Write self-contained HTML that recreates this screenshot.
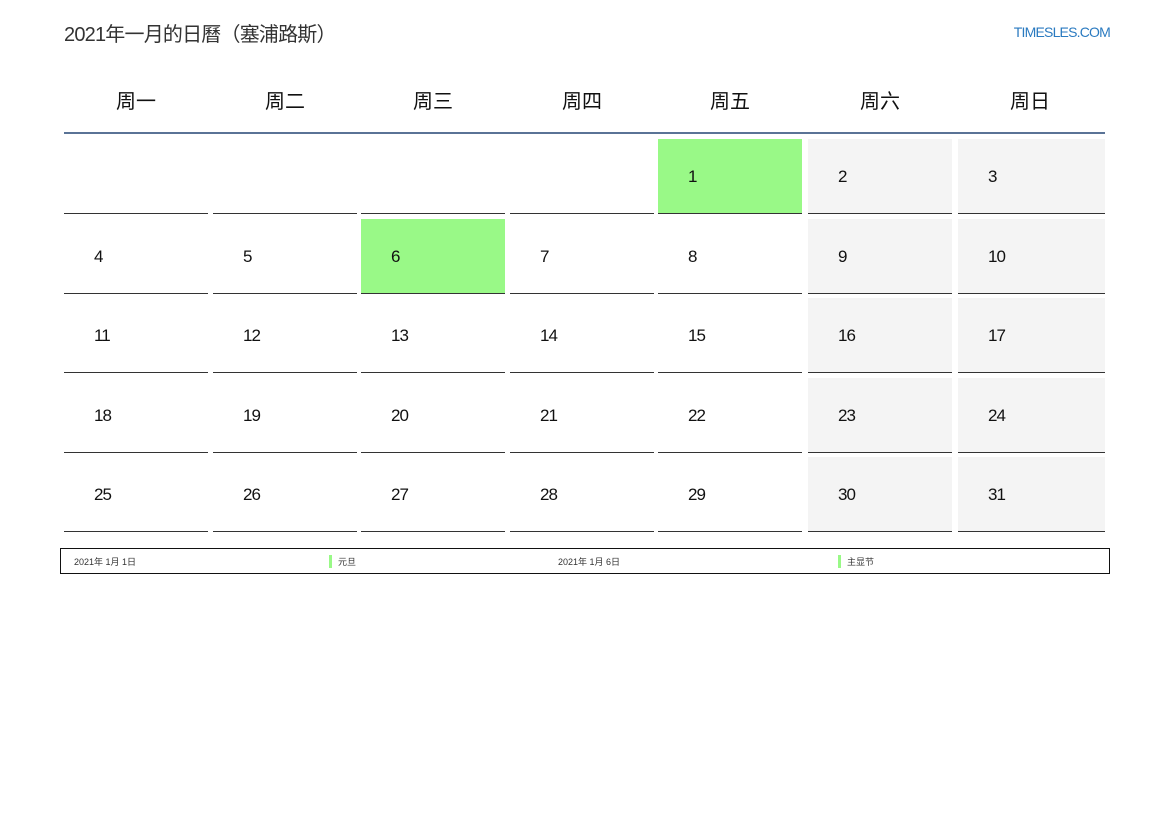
<!DOCTYPE html>
<html><head><meta charset="utf-8"><style>
body{margin:0;width:1169px;height:827px;background:#fff;font-family:"Liberation Sans","Noto Sans CJK SC",sans-serif;position:relative;overflow:hidden}
.t{position:absolute;left:64px;top:18px;font-size:20px;color:#333;letter-spacing:-0.8px}
.l{position:absolute;right:59px;top:24px;font-size:14px;color:#2a7ac0;letter-spacing:-0.8px}
.h{position:absolute;top:85px;width:144px;text-align:center;font-size:20px;color:#111}
.hl{position:absolute;left:64px;top:132px;width:1041px;height:2px;background:#5a7396}
.c{position:absolute;width:144px;height:75px;border-bottom:1px solid #333;box-sizing:border-box}
.c span{position:absolute;left:30px;top:28px;font-size:17px;color:#111;letter-spacing:-1px}
.w{background:#f4f4f4}.g{background:#99f987}
.f{position:absolute;left:60px;top:548px;width:1048px;height:24px;border:1px solid #111;font-size:9px;color:#333}
.f div{position:absolute;top:6px}
.bar{border-left:3px solid #99f987;padding-left:6px}
</style></head><body>
<div class="t">2021年一月的日曆（塞浦路斯）</div>
<div class="l">TIMESLES.COM</div>
<div class="h" style="left:64px">周一</div><div class="h" style="left:213px">周二</div><div class="h" style="left:361px">周三</div><div class="h" style="left:510px">周四</div><div class="h" style="left:658px">周五</div><div class="h" style="left:808px">周六</div><div class="h" style="left:958px">周日</div>
<div class="hl"></div>
<div id="g"></div>
<script>
var xs=[64,213,361,510,658,808,958],ys=[139,219,298,378,457],h='';
for(var r=0;r<5;r++)for(var c=0;c<7;c++){var d=r*7+c-3;var cls='c';if(c>=5)cls+=' w';if(d==1||d==6)cls+=' g';
h+='<div class="'+cls+'" style="left:'+xs[c]+'px;top:'+ys[r]+'px;width:'+(c==6?147:144)+'px">'+(d>=1?'<span>'+d+'</span>':'')+'</div>';}
document.getElementById('g').innerHTML=h;
</script>
<div class="f"><div style="left:13px">2021年 1月 1日</div><div class="bar" style="left:268px">元旦</div><div style="left:497px">2021年 1月 6日</div><div class="bar" style="left:777px">主显节</div></div>
</body></html>
